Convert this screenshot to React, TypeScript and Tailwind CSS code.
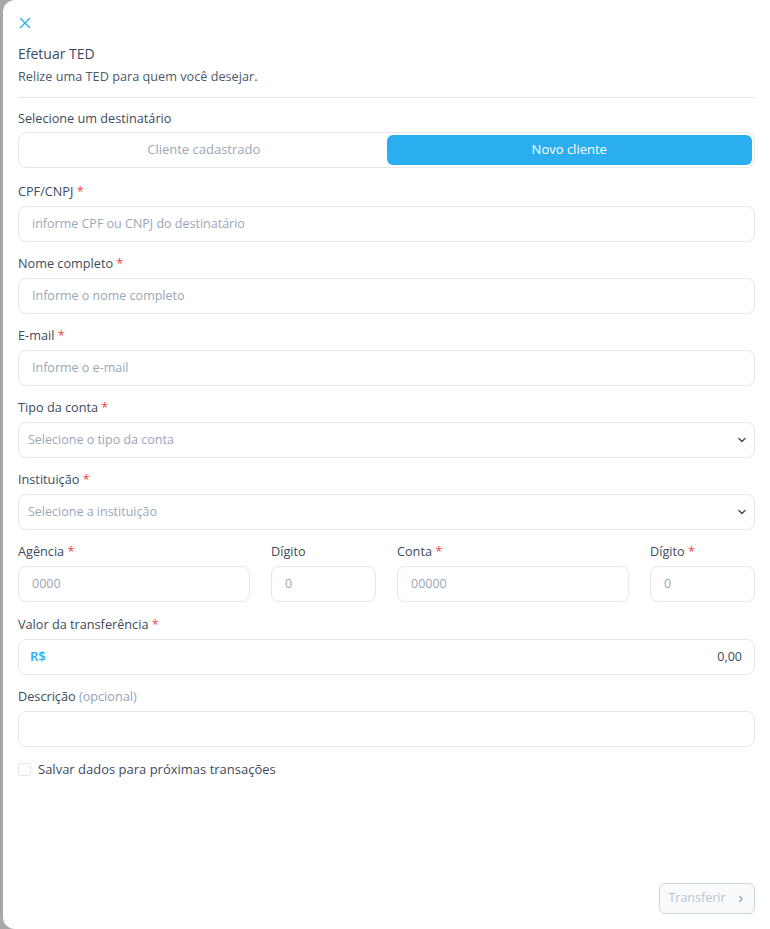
import React from "react";

const font = { fontFamily: '"Open Sans", "Noto Sans", sans-serif' };

function Label({ text, required, optional }: { text: string; required?: boolean; optional?: boolean }) {
  return (
    <div className="text-[12.7px] leading-[16px] text-[#3d4b5c] mb-[7px] whitespace-nowrap">
      {text}
      {required && <span className="text-[#ef4444]"> *</span>}
      {optional && <span className="text-[#94a3b8]"> (opcional)</span>}
    </div>
  );
}

function Input({ placeholder, children }: { placeholder?: string; children?: React.ReactNode }) {
  return (
    <div className="h-[36px] rounded-[8px] border border-[#e5e7eb] bg-white flex items-center px-[13px] text-[12.5px] text-[#9aa7b7] whitespace-nowrap">
      {placeholder}
      {children}
    </div>
  );
}

function Select({ placeholder }: { placeholder: string }) {
  return (
    <div className="h-[36px] rounded-[8px] border border-[#e5e7eb] bg-white flex items-center justify-between pl-[9px] pr-[6px] text-[12.5px] text-[#9aa7b7]">
      <span>{placeholder}</span>
      <svg width="12" height="12" viewBox="0 0 24 24" fill="none" stroke="#475569" strokeWidth="3" strokeLinecap="round" strokeLinejoin="round">
        <path d="M6 9l6 6 6-6" />
      </svg>
    </div>
  );
}

export default function App() {
  return (
    <div className="w-[770px] h-[929px] bg-[#a8a8a8] flex overflow-hidden" style={font}>
      <div className="ml-[3px] flex-1 bg-white rounded-l-[12px] px-[15px] pt-[17px] pb-[15px] flex flex-col">
        <div className="h-[12px] flex items-center pl-[1px]">
          <svg width="12" height="12" viewBox="0 0 12 12" stroke="#2aaef0" strokeWidth="1.4" strokeLinecap="round">
            <path d="M1.5 1.5l9 9M10.5 1.5l-9 9" />
          </svg>
        </div>
        <div className="mt-[16px] text-[14px] leading-[18px] text-[#3d4b5c]">Efetuar TED</div>
        <div className="mt-[5px] text-[12.7px] leading-[16px] text-[#4b5a6b]">Relize uma TED para quem você desejar.</div>
        <div className="mt-[13px] h-px bg-[#e2e4e8]" />
        <div className="mt-[12px]">
          <Label text="Selecione um destinatário" />
          <div className="h-[36px] rounded-[8px] border border-[#e5e7eb] p-[2px] flex mt-[-1px]">
            <div className="flex-1 flex items-center justify-center text-[13px] text-[#9aa7b7]">Cliente cadastrado</div>
            <div className="flex-1 flex items-center justify-center text-[13px] text-white bg-[#2aaef0] rounded-[6px]">Novo cliente</div>
          </div>
        </div>
        <div className="mt-[15px]">
          <Label text="CPF/CNPJ" required />
          <Input placeholder="informe CPF ou CNPJ do destinatário" />
        </div>
        <div className="mt-[13px]">
          <Label text="Nome completo" required />
          <Input placeholder="Informe o nome completo" />
        </div>
        <div className="mt-[13px]">
          <Label text="E-mail" required />
          <Input placeholder="Informe o e-mail" />
        </div>
        <div className="mt-[13px]">
          <Label text="Tipo da conta" required />
          <Select placeholder="Selecione o tipo da conta" />
        </div>
        <div className="mt-[13px]">
          <Label text="Instituição" required />
          <Select placeholder="Selecione a instituição" />
        </div>
        <div className="mt-[13px] grid grid-cols-[232fr_105fr_232fr_105fr] gap-x-[21px]">
          <div>
            <Label text="Agência" required />
            <Input placeholder="0000" />
          </div>
          <div>
            <Label text="Dígito" />
            <Input placeholder="0" />
          </div>
          <div>
            <Label text="Conta" required />
            <Input placeholder="00000" />
          </div>
          <div>
            <Label text="Dígito" required />
            <Input placeholder="0" />
          </div>
        </div>
        <div className="mt-[14px]">
          <Label text="Valor da transferência" required />
          <div className="h-[36px] rounded-[8px] border border-[#e5e7eb] bg-white flex items-center justify-between pl-[11px] pr-[12px] text-[12.5px]">
            <span className="text-[#2aaef0] text-[13px] font-semibold">R$</span>
            <span className="text-[#3d4b5c]">0,00</span>
          </div>
        </div>
        <div className="mt-[13px]">
          <Label text="Descrição" optional />
          <Input />
        </div>
        <div className="mt-[14px] flex items-center gap-[7px]">
          <div className="w-[13px] h-[13px] rounded-[3px] border border-[#e2e4e8] bg-white" />
          <span className="text-[13px] leading-[16px] text-[#3d4b5c]">Salvar dados para próximas transações</span>
        </div>
        <div className="flex-1" />
        <div className="flex justify-end">
          <div className="h-[31px] w-[96px] rounded-[6px] border border-[#cbd5e1] bg-[#f8fafc] flex items-center justify-center gap-[10px] text-[12.5px] text-[#b8c4d2]">
            <span>Transferir</span>
            <svg width="10" height="10" viewBox="0 0 24 24" fill="none" stroke="#94a3b8" strokeWidth="3" strokeLinecap="round" strokeLinejoin="round">
              <path d="M9 6l6 6-6 6" />
            </svg>
          </div>
        </div>
      </div>
    </div>
  );
}
